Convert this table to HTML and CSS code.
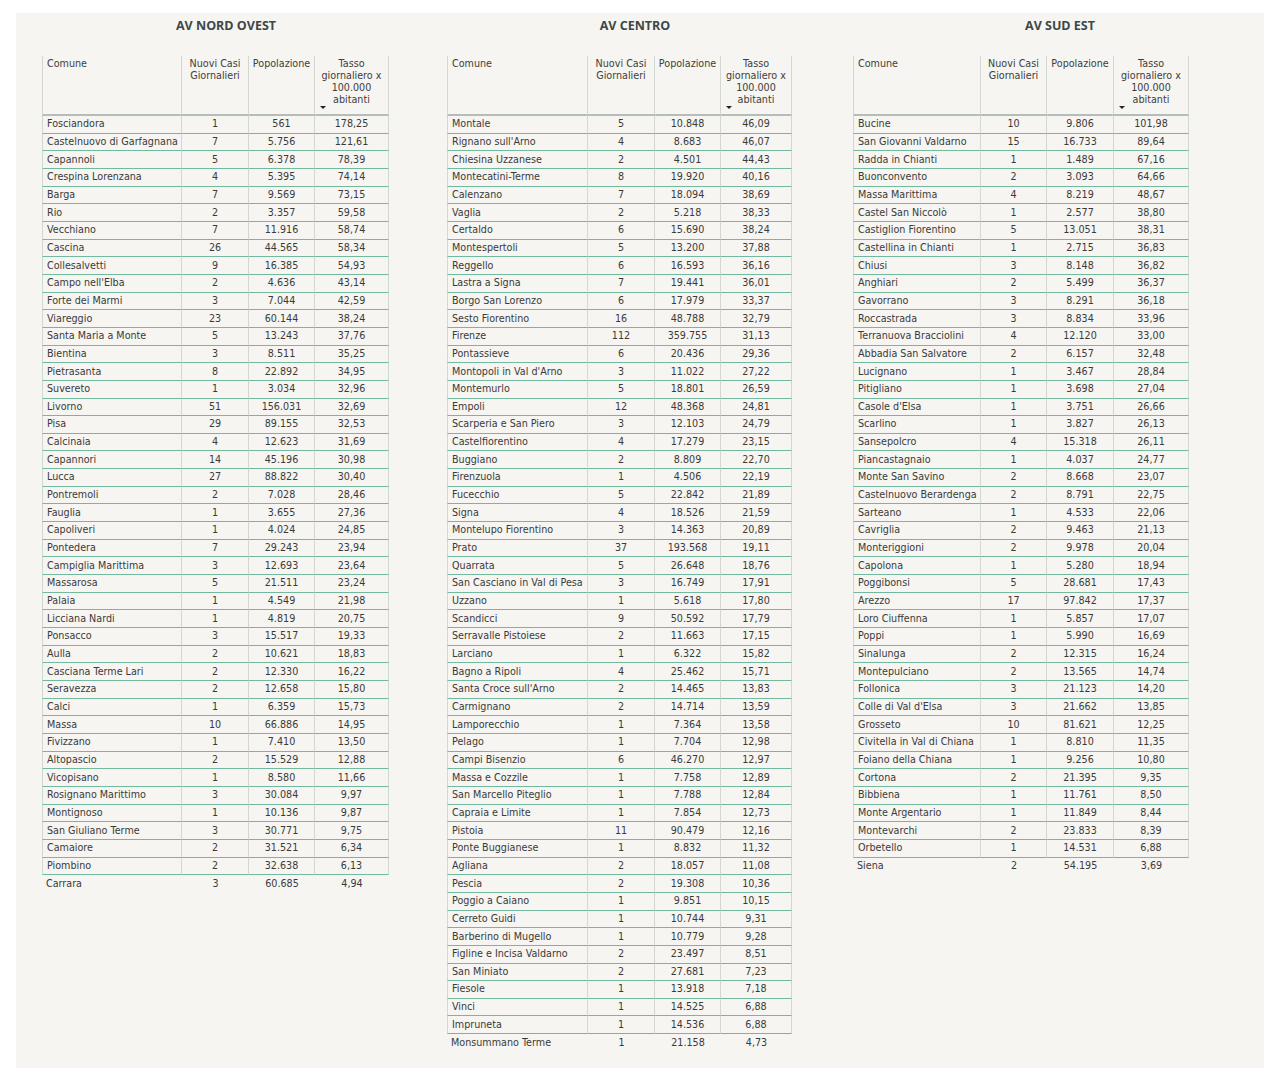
FILE: index.html
```html
<!DOCTYPE html>
<html lang="it">
<head>
<meta charset="utf-8">
<title>Tasso giornaliero per Area Vasta</title>
<link rel="stylesheet" href="styles.css">
</head>
<body>
<main class="panel">

<section class="region region-nw">
<h2 class="region-title">AV NORD OVEST</h2>
<table class="data">
<colgroup><col class="nw-c1"><col class="nw-c2"><col class="nw-c3"><col class="nw-c4"></colgroup>
<thead><tr><th class="name">Comune</th><th>Nuovi Casi<br>Giornalieri</th><th>Popolazione</th><th class="sorted">Tasso<br>giornaliero x<br>100.000<br>abitanti<span class="sort-arrow"></span></th></tr></thead>
<tbody>
<tr><td>Fosciandora</td><td>1</td><td>561</td><td>178,25</td></tr>
<tr><td>Castelnuovo di Garfagnana</td><td>7</td><td>5.756</td><td>121,61</td></tr>
<tr><td>Capannoli</td><td>5</td><td>6.378</td><td>78,39</td></tr>
<tr><td>Crespina Lorenzana</td><td>4</td><td>5.395</td><td>74,14</td></tr>
<tr><td>Barga</td><td>7</td><td>9.569</td><td>73,15</td></tr>
<tr><td>Rio</td><td>2</td><td>3.357</td><td>59,58</td></tr>
<tr><td>Vecchiano</td><td>7</td><td>11.916</td><td>58,74</td></tr>
<tr><td>Cascina</td><td>26</td><td>44.565</td><td>58,34</td></tr>
<tr><td>Collesalvetti</td><td>9</td><td>16.385</td><td>54,93</td></tr>
<tr><td>Campo nell'Elba</td><td>2</td><td>4.636</td><td>43,14</td></tr>
<tr><td>Forte dei Marmi</td><td>3</td><td>7.044</td><td>42,59</td></tr>
<tr><td>Viareggio</td><td>23</td><td>60.144</td><td>38,24</td></tr>
<tr><td>Santa Maria a Monte</td><td>5</td><td>13.243</td><td>37,76</td></tr>
<tr><td>Bientina</td><td>3</td><td>8.511</td><td>35,25</td></tr>
<tr><td>Pietrasanta</td><td>8</td><td>22.892</td><td>34,95</td></tr>
<tr><td>Suvereto</td><td>1</td><td>3.034</td><td>32,96</td></tr>
<tr><td>Livorno</td><td>51</td><td>156.031</td><td>32,69</td></tr>
<tr><td>Pisa</td><td>29</td><td>89.155</td><td>32,53</td></tr>
<tr><td>Calcinaia</td><td>4</td><td>12.623</td><td>31,69</td></tr>
<tr><td>Capannori</td><td>14</td><td>45.196</td><td>30,98</td></tr>
<tr><td>Lucca</td><td>27</td><td>88.822</td><td>30,40</td></tr>
<tr><td>Pontremoli</td><td>2</td><td>7.028</td><td>28,46</td></tr>
<tr><td>Fauglia</td><td>1</td><td>3.655</td><td>27,36</td></tr>
<tr><td>Capoliveri</td><td>1</td><td>4.024</td><td>24,85</td></tr>
<tr><td>Pontedera</td><td>7</td><td>29.243</td><td>23,94</td></tr>
<tr><td>Campiglia Marittima</td><td>3</td><td>12.693</td><td>23,64</td></tr>
<tr><td>Massarosa</td><td>5</td><td>21.511</td><td>23,24</td></tr>
<tr><td>Palaia</td><td>1</td><td>4.549</td><td>21,98</td></tr>
<tr><td>Licciana Nardi</td><td>1</td><td>4.819</td><td>20,75</td></tr>
<tr><td>Ponsacco</td><td>3</td><td>15.517</td><td>19,33</td></tr>
<tr><td>Aulla</td><td>2</td><td>10.621</td><td>18,83</td></tr>
<tr><td>Casciana Terme Lari</td><td>2</td><td>12.330</td><td>16,22</td></tr>
<tr><td>Seravezza</td><td>2</td><td>12.658</td><td>15,80</td></tr>
<tr><td>Calci</td><td>1</td><td>6.359</td><td>15,73</td></tr>
<tr><td>Massa</td><td>10</td><td>66.886</td><td>14,95</td></tr>
<tr><td>Fivizzano</td><td>1</td><td>7.410</td><td>13,50</td></tr>
<tr><td>Altopascio</td><td>2</td><td>15.529</td><td>12,88</td></tr>
<tr><td>Vicopisano</td><td>1</td><td>8.580</td><td>11,66</td></tr>
<tr><td>Rosignano Marittimo</td><td>3</td><td>30.084</td><td>9,97</td></tr>
<tr><td>Montignoso</td><td>1</td><td>10.136</td><td>9,87</td></tr>
<tr><td>San Giuliano Terme</td><td>3</td><td>30.771</td><td>9,75</td></tr>
<tr><td>Camaiore</td><td>2</td><td>31.521</td><td>6,34</td></tr>
<tr><td>Piombino</td><td>2</td><td>32.638</td><td>6,13</td></tr>
<tr><td>Carrara</td><td>3</td><td>60.685</td><td>4,94</td></tr>
</tbody>
</table>
</section>

<section class="region region-c">
<h2 class="region-title">AV CENTRO</h2>
<table class="data">
<colgroup><col class="c-c1"><col class="c-c2"><col class="c-c3"><col class="c-c4"></colgroup>
<thead><tr><th class="name">Comune</th><th>Nuovi Casi<br>Giornalieri</th><th>Popolazione</th><th class="sorted">Tasso<br>giornaliero x<br>100.000<br>abitanti<span class="sort-arrow"></span></th></tr></thead>
<tbody>
<tr><td>Montale</td><td>5</td><td>10.848</td><td>46,09</td></tr>
<tr><td>Rignano sull'Arno</td><td>4</td><td>8.683</td><td>46,07</td></tr>
<tr><td>Chiesina Uzzanese</td><td>2</td><td>4.501</td><td>44,43</td></tr>
<tr><td>Montecatini-Terme</td><td>8</td><td>19.920</td><td>40,16</td></tr>
<tr><td>Calenzano</td><td>7</td><td>18.094</td><td>38,69</td></tr>
<tr><td>Vaglia</td><td>2</td><td>5.218</td><td>38,33</td></tr>
<tr><td>Certaldo</td><td>6</td><td>15.690</td><td>38,24</td></tr>
<tr><td>Montespertoli</td><td>5</td><td>13.200</td><td>37,88</td></tr>
<tr><td>Reggello</td><td>6</td><td>16.593</td><td>36,16</td></tr>
<tr><td>Lastra a Signa</td><td>7</td><td>19.441</td><td>36,01</td></tr>
<tr><td>Borgo San Lorenzo</td><td>6</td><td>17.979</td><td>33,37</td></tr>
<tr><td>Sesto Fiorentino</td><td>16</td><td>48.788</td><td>32,79</td></tr>
<tr><td>Firenze</td><td>112</td><td>359.755</td><td>31,13</td></tr>
<tr><td>Pontassieve</td><td>6</td><td>20.436</td><td>29,36</td></tr>
<tr><td>Montopoli in Val d'Arno</td><td>3</td><td>11.022</td><td>27,22</td></tr>
<tr><td>Montemurlo</td><td>5</td><td>18.801</td><td>26,59</td></tr>
<tr><td>Empoli</td><td>12</td><td>48.368</td><td>24,81</td></tr>
<tr><td>Scarperia e San Piero</td><td>3</td><td>12.103</td><td>24,79</td></tr>
<tr><td>Castelfiorentino</td><td>4</td><td>17.279</td><td>23,15</td></tr>
<tr><td>Buggiano</td><td>2</td><td>8.809</td><td>22,70</td></tr>
<tr><td>Firenzuola</td><td>1</td><td>4.506</td><td>22,19</td></tr>
<tr><td>Fucecchio</td><td>5</td><td>22.842</td><td>21,89</td></tr>
<tr><td>Signa</td><td>4</td><td>18.526</td><td>21,59</td></tr>
<tr><td>Montelupo Fiorentino</td><td>3</td><td>14.363</td><td>20,89</td></tr>
<tr><td>Prato</td><td>37</td><td>193.568</td><td>19,11</td></tr>
<tr><td>Quarrata</td><td>5</td><td>26.648</td><td>18,76</td></tr>
<tr><td>San Casciano in Val di Pesa</td><td>3</td><td>16.749</td><td>17,91</td></tr>
<tr><td>Uzzano</td><td>1</td><td>5.618</td><td>17,80</td></tr>
<tr><td>Scandicci</td><td>9</td><td>50.592</td><td>17,79</td></tr>
<tr><td>Serravalle Pistoiese</td><td>2</td><td>11.663</td><td>17,15</td></tr>
<tr><td>Larciano</td><td>1</td><td>6.322</td><td>15,82</td></tr>
<tr><td>Bagno a Ripoli</td><td>4</td><td>25.462</td><td>15,71</td></tr>
<tr><td>Santa Croce sull'Arno</td><td>2</td><td>14.465</td><td>13,83</td></tr>
<tr><td>Carmignano</td><td>2</td><td>14.714</td><td>13,59</td></tr>
<tr><td>Lamporecchio</td><td>1</td><td>7.364</td><td>13,58</td></tr>
<tr><td>Pelago</td><td>1</td><td>7.704</td><td>12,98</td></tr>
<tr><td>Campi Bisenzio</td><td>6</td><td>46.270</td><td>12,97</td></tr>
<tr><td>Massa e Cozzile</td><td>1</td><td>7.758</td><td>12,89</td></tr>
<tr><td>San Marcello Piteglio</td><td>1</td><td>7.788</td><td>12,84</td></tr>
<tr><td>Capraia e Limite</td><td>1</td><td>7.854</td><td>12,73</td></tr>
<tr><td>Pistoia</td><td>11</td><td>90.479</td><td>12,16</td></tr>
<tr><td>Ponte Buggianese</td><td>1</td><td>8.832</td><td>11,32</td></tr>
<tr><td>Agliana</td><td>2</td><td>18.057</td><td>11,08</td></tr>
<tr><td>Pescia</td><td>2</td><td>19.308</td><td>10,36</td></tr>
<tr><td>Poggio a Caiano</td><td>1</td><td>9.851</td><td>10,15</td></tr>
<tr><td>Cerreto Guidi</td><td>1</td><td>10.744</td><td>9,31</td></tr>
<tr><td>Barberino di Mugello</td><td>1</td><td>10.779</td><td>9,28</td></tr>
<tr><td>Figline e Incisa Valdarno</td><td>2</td><td>23.497</td><td>8,51</td></tr>
<tr><td>San Miniato</td><td>2</td><td>27.681</td><td>7,23</td></tr>
<tr><td>Fiesole</td><td>1</td><td>13.918</td><td>7,18</td></tr>
<tr><td>Vinci</td><td>1</td><td>14.525</td><td>6,88</td></tr>
<tr><td>Impruneta</td><td>1</td><td>14.536</td><td>6,88</td></tr>
<tr><td>Monsummano Terme</td><td>1</td><td>21.158</td><td>4,73</td></tr>
</tbody>
</table>
</section>

<section class="region region-se">
<h2 class="region-title">AV SUD EST</h2>
<table class="data">
<colgroup><col class="se-c1"><col class="se-c2"><col class="se-c3"><col class="se-c4"></colgroup>
<thead><tr><th class="name">Comune</th><th>Nuovi Casi<br>Giornalieri</th><th>Popolazione</th><th class="sorted">Tasso<br>giornaliero x<br>100.000<br>abitanti<span class="sort-arrow"></span></th></tr></thead>
<tbody>
<tr><td>Bucine</td><td>10</td><td>9.806</td><td>101,98</td></tr>
<tr><td>San Giovanni Valdarno</td><td>15</td><td>16.733</td><td>89,64</td></tr>
<tr><td>Radda in Chianti</td><td>1</td><td>1.489</td><td>67,16</td></tr>
<tr><td>Buonconvento</td><td>2</td><td>3.093</td><td>64,66</td></tr>
<tr><td>Massa Marittima</td><td>4</td><td>8.219</td><td>48,67</td></tr>
<tr><td>Castel San Niccolò</td><td>1</td><td>2.577</td><td>38,80</td></tr>
<tr><td>Castiglion Fiorentino</td><td>5</td><td>13.051</td><td>38,31</td></tr>
<tr><td>Castellina in Chianti</td><td>1</td><td>2.715</td><td>36,83</td></tr>
<tr><td>Chiusi</td><td>3</td><td>8.148</td><td>36,82</td></tr>
<tr><td>Anghiari</td><td>2</td><td>5.499</td><td>36,37</td></tr>
<tr><td>Gavorrano</td><td>3</td><td>8.291</td><td>36,18</td></tr>
<tr><td>Roccastrada</td><td>3</td><td>8.834</td><td>33,96</td></tr>
<tr><td>Terranuova Bracciolini</td><td>4</td><td>12.120</td><td>33,00</td></tr>
<tr><td>Abbadia San Salvatore</td><td>2</td><td>6.157</td><td>32,48</td></tr>
<tr><td>Lucignano</td><td>1</td><td>3.467</td><td>28,84</td></tr>
<tr><td>Pitigliano</td><td>1</td><td>3.698</td><td>27,04</td></tr>
<tr><td>Casole d'Elsa</td><td>1</td><td>3.751</td><td>26,66</td></tr>
<tr><td>Scarlino</td><td>1</td><td>3.827</td><td>26,13</td></tr>
<tr><td>Sansepolcro</td><td>4</td><td>15.318</td><td>26,11</td></tr>
<tr><td>Piancastagnaio</td><td>1</td><td>4.037</td><td>24,77</td></tr>
<tr><td>Monte San Savino</td><td>2</td><td>8.668</td><td>23,07</td></tr>
<tr><td>Castelnuovo Berardenga</td><td>2</td><td>8.791</td><td>22,75</td></tr>
<tr><td>Sarteano</td><td>1</td><td>4.533</td><td>22,06</td></tr>
<tr><td>Cavriglia</td><td>2</td><td>9.463</td><td>21,13</td></tr>
<tr><td>Monteriggioni</td><td>2</td><td>9.978</td><td>20,04</td></tr>
<tr><td>Capolona</td><td>1</td><td>5.280</td><td>18,94</td></tr>
<tr><td>Poggibonsi</td><td>5</td><td>28.681</td><td>17,43</td></tr>
<tr><td>Arezzo</td><td>17</td><td>97.842</td><td>17,37</td></tr>
<tr><td>Loro Ciuffenna</td><td>1</td><td>5.857</td><td>17,07</td></tr>
<tr><td>Poppi</td><td>1</td><td>5.990</td><td>16,69</td></tr>
<tr><td>Sinalunga</td><td>2</td><td>12.315</td><td>16,24</td></tr>
<tr><td>Montepulciano</td><td>2</td><td>13.565</td><td>14,74</td></tr>
<tr><td>Follonica</td><td>3</td><td>21.123</td><td>14,20</td></tr>
<tr><td>Colle di Val d'Elsa</td><td>3</td><td>21.662</td><td>13,85</td></tr>
<tr><td>Grosseto</td><td>10</td><td>81.621</td><td>12,25</td></tr>
<tr><td>Civitella in Val di Chiana</td><td>1</td><td>8.810</td><td>11,35</td></tr>
<tr><td>Foiano della Chiana</td><td>1</td><td>9.256</td><td>10,80</td></tr>
<tr><td>Cortona</td><td>2</td><td>21.395</td><td>9,35</td></tr>
<tr><td>Bibbiena</td><td>1</td><td>11.761</td><td>8,50</td></tr>
<tr><td>Monte Argentario</td><td>1</td><td>11.849</td><td>8,44</td></tr>
<tr><td>Montevarchi</td><td>2</td><td>23.833</td><td>8,39</td></tr>
<tr><td>Orbetello</td><td>1</td><td>14.531</td><td>6,88</td></tr>
<tr><td>Siena</td><td>2</td><td>54.195</td><td>3,69</td></tr>
</tbody>
</table>
</section>

</main>
</body>
</html>
```

FILE: styles.css
```css
html, body {
  margin: 0;
  padding: 0;
  background: #ffffff;
}

.panel {
  margin: 13px 16px 0;
  height: 1055px;
  background: #f6f5f1;
  display: flex;
  font-family: "DejaVu Sans", Verdana, sans-serif;
  color: #3a3a3a;
}

.region {
  width: 416px;
  flex: none;
}

.region-title {
  margin: 0;
  padding-top: 6px;
  height: 14px;
  line-height: 14px;
  text-align: center;
  font-family: "Open Sans", "DejaVu Sans", sans-serif;
  font-weight: 700;
  font-size: 12.5px;
  color: #3c4848;
}

.region-nw .region-title { padding-left: 4px; }
.region-c .region-title { padding-right: 10px; }
.region-se .region-title { padding-left: 8px; }

.data {
  margin-top: 23px;
  border-collapse: separate;
  border-spacing: 0;
  table-layout: fixed;
  font-size: 9.6px;
}

.region-nw .data { margin-left: 26px; width: 347px; }
.region-c .data { margin-left: 15px; width: 345px; }
.region-se .data { margin-left: 5px; width: 336px; }

.nw-c1 { width: 140px; }
.nw-c2 { width: 67px; }
.nw-c3 { width: 66px; }
.nw-c4 { width: 74px; }

.c-c1 { width: 141px; }
.c-c2 { width: 67px; }
.c-c3 { width: 66px; }
.c-c4 { width: 71px; }

.se-c1 { width: 128px; }
.se-c2 { width: 66px; }
.se-c3 { width: 67px; }
.se-c4 { width: 75px; }

.data th {
  height: 60px;
  box-sizing: border-box;
  padding: 2px 3px 0;
  vertical-align: top;
  font-weight: normal;
  line-height: 12px;
  text-align: center;
  color: #404040;
  border-right: 1px solid #d3d7d2;
  border-bottom: 2px solid #b6bdb8;
}

.data th.name {
  text-align: left;
  padding-left: 4px;
  border-left: 1px solid #d3d7d2;
}

.data th.sorted {
  position: relative;
}

.sort-arrow {
  position: absolute;
  left: 5px;
  bottom: 5px;
  width: 0;
  height: 0;
  border-left: 3px solid transparent;
  border-right: 3px solid transparent;
  border-top: 3.5px solid #222;
}

.data tbody tr {
  height: 17.67px;
}

.data td {
  padding: 0 2px;
  line-height: 14px;
  white-space: nowrap;
  text-align: center;
  vertical-align: middle;
  border-right: 1px solid #d3d7d2;
  border-bottom: 1px solid #72b99f;
}

.data td:first-child {
  text-align: left;
  padding-left: 4px;
  border-left: 1px solid #d3d7d2;
}

.data tbody tr:last-child td {
  border: none;
}
```
